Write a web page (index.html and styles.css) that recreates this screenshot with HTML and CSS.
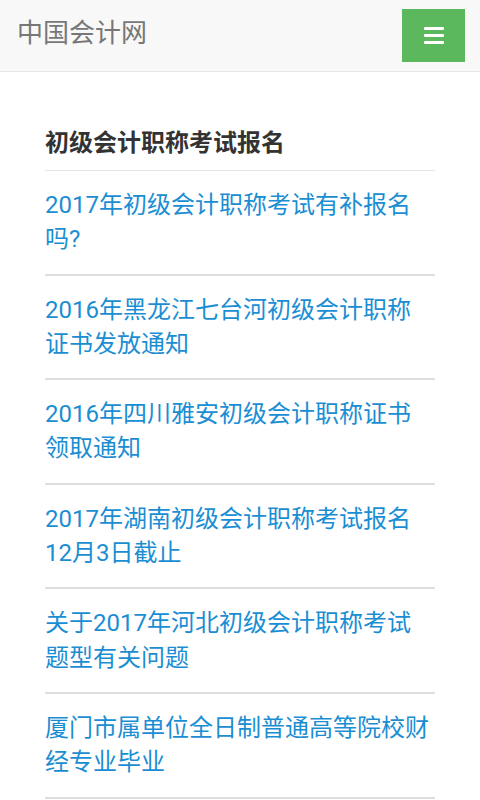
FILE: index.html
```html
<!DOCTYPE html>
<html lang="zh-CN">
<head>
	<meta charset="UTF-8">
	<title>中国会计网</title>
<link rel="stylesheet" href="styles.css">
</head>
<body>
<div class="navbar">
	<a class="brand" href="#">中国会计网</a>
	<button class="toggle" type="button">
		<span class="bar"></span>
		<span class="bar"></span>
		<span class="bar"></span>
	</button>
</div>
<div class="content">
	<h2 class="title">初级会计职称考试报名</h2>
	<ul class="news">
		<li><a href="#">2017年初级会计职称考试有补报名吗?</a></li>
		<li><a href="#">2016年黑龙江七台河初级会计职称证书发放通知</a></li>
		<li><a href="#">2016年四川雅安初级会计职称证书领取通知</a></li>
		<li><a href="#">2017年湖南初级会计职称考试报名12月3日截止</a></li>
		<li><a href="#">关于2017年河北初级会计职称考试题型有关问题</a></li>
		<li><a href="#">厦门市属单位全日制普通高等院校财经专业毕业</a></li>
	</ul>
</div>
</body>
</html>
```

FILE: styles.css
```css
*{padding:0;margin:0;list-style:none;box-sizing:border-box;}
body{
	font-family: Roboto, "Noto Sans CJK SC", sans-serif;
	background:#fff;
	color:#333;
}
a{text-decoration:none;}

/*顶部导航*/
.navbar{
	height: 72px;
	background:#f8f8f8;
	border-bottom:1px solid #e7e7e7;
	display:flex;
	align-items:center;
	justify-content:space-between;
	padding:0 15px 0 17px;
}
.navbar .brand{
	font-size:26px;
	color:#777;
	line-height:1;
	margin-top:-5px;
}
.navbar .toggle{
	width: 63px;
	height: 53px;
	background:#5cb85c;
	border:none;
	display:flex;
	flex-direction:column;
	align-items:center;
	justify-content:center;
	gap:4px;
	margin-top:-1px;
}
.navbar .toggle .bar{
	display:block;
	width: 20px;
	height: 3px;
	background:#fff;
	border-radius:1px;
}

/*列表*/
.content{
	padding:54px 45px 0;
}
.content .title{
	font-size:24px;
	font-weight:bold;
	line-height:34px;
	color:#333;
	padding-bottom:10px;
	border-bottom:1px solid #e5e5e5;
}
.news li{
	border-bottom:2px solid #dedede;
}
.news li a{
	display:block;
	font-size:24px;
	line-height:34.3px;
	color:#1b8ed3;
	padding:17px 3px 17px 0;
}
```
